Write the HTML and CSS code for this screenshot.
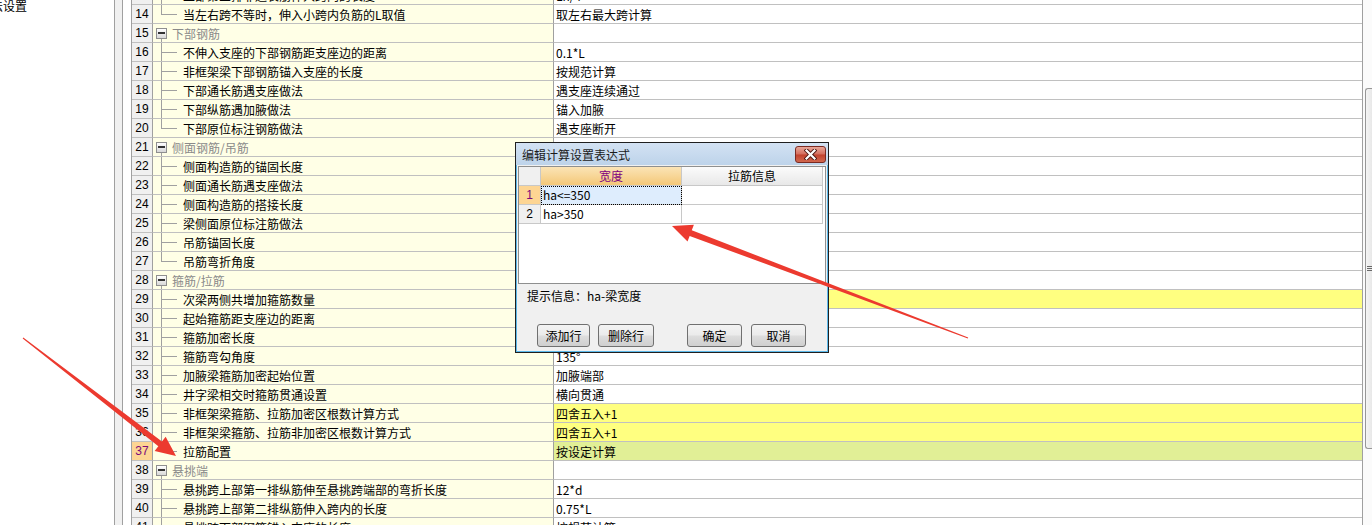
FILE: index.html
```html
<!DOCTYPE html>
<html lang="zh-CN">
<head>
<meta charset="utf-8">
<title>计算设置</title>
<link rel="stylesheet" href="styles.css">
</head>
<body>
<div class="app">
  <div class="side"><div class="side-title">方法设置</div></div>
  <div class="splitter"></div>
  <div class="main">
    <div class="grid">
      <div class="row"><div class="num">13</div><div class="name child">上部第三排非通长筋伸入跨内的长度</div><div class="val">Ln/4</div></div>
      <div class="row"><div class="num">14</div><div class="name child last">当左右跨不等时，伸入小跨内负筋的L取值</div><div class="val">取左右最大跨计算</div></div>
      <div class="row"><div class="num">15</div><div class="name group"><span class="box"></span>下部钢筋</div><div class="val"></div></div>
      <div class="row"><div class="num">16</div><div class="name child">不伸入支座的下部钢筋距支座边的距离</div><div class="val">0.1*L</div></div>
      <div class="row"><div class="num">17</div><div class="name child">非框架梁下部钢筋锚入支座的长度</div><div class="val">按规范计算</div></div>
      <div class="row"><div class="num">18</div><div class="name child">下部通长筋遇支座做法</div><div class="val">遇支座连续通过</div></div>
      <div class="row"><div class="num">19</div><div class="name child">下部纵筋遇加腋做法</div><div class="val">锚入加腋</div></div>
      <div class="row"><div class="num">20</div><div class="name child last">下部原位标注钢筋做法</div><div class="val">遇支座断开</div></div>
      <div class="row"><div class="num">21</div><div class="name group"><span class="box"></span>侧面钢筋/吊筋</div><div class="val"></div></div>
      <div class="row"><div class="num">22</div><div class="name child">侧面构造筋的锚固长度</div><div class="val">15*d</div></div>
      <div class="row"><div class="num">23</div><div class="name child">侧面通长筋遇支座做法</div><div class="val">遇支座断开</div></div>
      <div class="row"><div class="num">24</div><div class="name child">侧面构造筋的搭接长度</div><div class="val">15*d</div></div>
      <div class="row"><div class="num">25</div><div class="name child">梁侧面原位标注筋做法</div><div class="val">遇支座断开</div></div>
      <div class="row"><div class="num">26</div><div class="name child">吊筋锚固长度</div><div class="val">20*d</div></div>
      <div class="row"><div class="num">27</div><div class="name child last">吊筋弯折角度</div><div class="val">按规范计算</div></div>
      <div class="row"><div class="num">28</div><div class="name group"><span class="box"></span>箍筋/拉筋</div><div class="val"></div></div>
      <div class="row"><div class="num">29</div><div class="name child">次梁两侧共增加箍筋数量</div><div class="val y">0</div></div>
      <div class="row"><div class="num">30</div><div class="name child">起始箍筋距支座边的距离</div><div class="val">50</div></div>
      <div class="row"><div class="num">31</div><div class="name child">箍筋加密长度</div><div class="val">按规范计算</div></div>
      <div class="row"><div class="num">32</div><div class="name child">箍筋弯勾角度</div><div class="val">135°</div></div>
      <div class="row"><div class="num">33</div><div class="name child">加腋梁箍筋加密起始位置</div><div class="val">加腋端部</div></div>
      <div class="row"><div class="num">34</div><div class="name child">井字梁相交时箍筋贯通设置</div><div class="val">横向贯通</div></div>
      <div class="row"><div class="num">35</div><div class="name child">非框架梁箍筋、拉筋加密区根数计算方式</div><div class="val y">四舍五入+1</div></div>
      <div class="row"><div class="num">36</div><div class="name child">非框架梁箍筋、拉筋非加密区根数计算方式</div><div class="val y">四舍五入+1</div></div>
      <div class="row"><div class="num sel">37</div><div class="name child last">拉筋配置</div><div class="val g">按设定计算</div></div>
      <div class="row"><div class="num">38</div><div class="name group"><span class="box"></span>悬挑端</div><div class="val"></div></div>
      <div class="row"><div class="num">39</div><div class="name child">悬挑跨上部第一排纵筋伸至悬挑跨端部的弯折长度</div><div class="val">12*d</div></div>
      <div class="row"><div class="num">40</div><div class="name child">悬挑跨上部第二排纵筋伸入跨内的长度</div><div class="val">0.75*L</div></div>
      <div class="row"><div class="num">41</div><div class="name child">悬挑跨下部钢筋锚入支座的长度</div><div class="val">按规范计算</div></div>
    </div>
    <div class="vscroll"><div class="thumb"><div class="grip"></div></div></div>
  </div>
</div>

<div class="dlg">
  <div class="dlg-title">
    <span>编辑计算设置表达式</span>
    <div class="close">
      <svg width="13" height="11" viewBox="0 0 13 11">
        <path d="M2.5 1.5 L10.5 9.5 M10.5 1.5 L2.5 9.5" stroke="#4a1510" stroke-width="4" stroke-linecap="square"/>
        <path d="M2.5 1.5 L10.5 9.5 M10.5 1.5 L2.5 9.5" stroke="#ffffff" stroke-width="2.2" stroke-linecap="square"/>
      </svg>
    </div>
  </div>
  <div class="dlg-body">
    <div class="egrid">
      <div class="erow"><div class="ec-n"></div><div class="ec eh1">宽度</div><div class="ec eh2">拉筋信息</div></div>
      <div class="erow"><div class="ec-n sel">1</div><div class="ec focus">ha&lt;=350</div><div class="ec"></div></div>
      <div class="erow"><div class="ec-n">2</div><div class="ec">ha&gt;350</div><div class="ec"></div></div>
    </div>
    <div class="hint">提示信息：ha-梁宽度</div>
    <div class="btns">
      <div class="btn b1">添加行</div>
      <div class="btn b2">删除行</div>
      <div class="btn b3">确定</div>
      <div class="btn b4">取消</div>
    </div>
  </div>
</div>

<svg class="arrows" width="1372" height="525" viewBox="0 0 1372 525">
  <polygon fill="#ec3a2f" points="176,456 154.66,450.92 158.33,446.17 22.69,338.40 23.31,337.60 161.99,441.41 165.66,436.66"/>
  <polygon fill="#ec3a2f" points="672,226 693.89,224.66 691.77,230.27 968.18,337.53 967.82,338.47 689.65,235.89 687.52,241.50"/>
</svg>
</body>
</html>
```
FILE: styles.css
```css
* { box-sizing: border-box; }
html, body { margin: 0; padding: 0; }
body {
  width: 1372px;
  height: 525px;
  overflow: hidden;
  position: relative;
  background: #fff;
  font-family: "Noto Sans CJK SC", "Noto Sans", sans-serif;
  font-size: 12px;
  color: #000;
}
.app { display: flex; height: 525px; }
.side {
  width: 115px;
  flex-shrink: 0;
  border-right: 1px solid #a0a0a0;
  background: #fff;
  overflow: hidden;
}
.side-title {
  margin-top: -4px;
  line-height: 19px;
  text-indent: -21px;
  white-space: nowrap;
}
.splitter {
  width: 8px;
  flex-shrink: 0;
  background: #f0f0f0;
  border-right: 1px solid #a0a0a0;
}
.main {
  flex: 1;
  display: flex;
  padding-left: 8px;
  overflow: hidden;
}
.grid {
  width: 1232px;
  flex-shrink: 0;
  margin-top: -14px;
  border-left: 1px solid #a0a0a0;
  border-right: 1px solid #a0a0a0;
}
.row { display: flex; height: 19px; }
.num {
  width: 21px;
  flex-shrink: 0;
  border-right: 1px solid #a0a0a0;
  border-bottom: 1px solid #c0c0c0;
  background: #f0f0f0;
  font-family: "Liberation Sans", sans-serif;
  font-size: 12px;
  line-height: 19px;
  text-align: center;
  overflow: hidden;
}
.num.sel { background: #fdd593; color: #7a0a7a; }
.name {
  width: 401px;
  flex-shrink: 0;
  border-right: 1px solid #a0a0a0;
  border-bottom: 1px solid #c0c0c0;
  background-color: #ffffe6;
  line-height: 19px;
  padding-left: 30px;
  white-space: nowrap;
  overflow: hidden;
}
.child {
  background-image: linear-gradient(#a0a0a0, #a0a0a0), linear-gradient(#a0a0a0, #a0a0a0);
  background-size: 1px 100%, 15px 1px;
  background-position: 8px 0, 9px 9px;
  background-repeat: no-repeat;
}
.child.last { background-size: 1px 10px, 15px 1px; }
.group {
  padding-left: 3px;
  color: #8a8a8a;
  display: flex;
  align-items: center;
  background-image: linear-gradient(#a0a0a0, #a0a0a0);
  background-size: 1px 4px;
  background-position: 8px 15px;
  background-repeat: no-repeat;
}
.box {
  width: 11px;
  height: 11px;
  flex-shrink: 0;
  margin-right: 5px;
  border: 1px solid #8f8f8f;
  background: linear-gradient(#ffffff, #d8d8d8);
  display: flex;
  align-items: center;
  justify-content: center;
}
.box::after {
  content: "";
  width: 7px;
  height: 2px;
  background: #333;
}
.val {
  flex: 1;
  border-bottom: 1px solid #c0c0c0;
  background: #fff;
  padding-left: 2px;
  line-height: 19px;
  white-space: nowrap;
  overflow: hidden;
}
.val.y { background: #ffff80; }
.val.g { background: #e1ef96; }

.vscroll {
  width: 9px;
  flex-shrink: 0;
  background: #fbfbfb;
  padding-top: 88px;
}
.thumb {
  margin-left: 2px;
  width: 9px;
  height: 361px;
  border: 1px solid #979797;
  border-right: none;
  border-radius: 3px 0 0 3px;
  background: linear-gradient(90deg, #f5f5f5, #e3e3e3);
  display: flex;
  align-items: center;
}
.grip {
  width: 6px;
  height: 5px;
  margin-left: 1px;
  background: repeating-linear-gradient(#6a6a6a 0 1px, transparent 1px 2px);
}

/* dialog */
.dlg {
  position: absolute;
  left: 515px;
  top: 142px;
  width: 314px;
  height: 211px;
  border: 1px solid #1f1f1f;
  background: #5cb9ea;
  display: flex;
  flex-direction: column;
}
.dlg-title {
  height: 22px;
  flex-shrink: 0;
  background: linear-gradient(#d3e2f3, #bdd3ea);
  display: flex;
  align-items: flex-start;
  padding-left: 6px;
}
.dlg-title span { line-height: 23px; color: #1b1b1b; }
.close {
  margin-left: auto;
  margin-right: 2px;
  margin-top: 3px;
  width: 31px;
  height: 17px;
  border: 1px solid #7a2a22;
  border-radius: 3px;
  background: linear-gradient(#e8a799, #d46d5d 48%, #c2412d 52%, #d0684f);
  display: flex;
  align-items: center;
  justify-content: center;
}
.dlg-body {
  flex: 1;
  margin: 0 1px 1px;
  background: #f0f0f0;
  padding: 1px 1px 0;
}
.egrid {
  height: 118px;
  border: 1px solid #8e8f8f;
  background: #fff;
}
.erow { display: flex; height: 19px; }
.ec-n {
  width: 22px;
  flex-shrink: 0;
  border-right: 1px solid #c8c8c8;
  border-bottom: 1px solid #c8c8c8;
  background: #f0f0f0;
  text-align: center;
  line-height: 18px;
  font-family: "Liberation Sans", sans-serif;
}
.ec-n.sel { background: #fdd593; color: #7a0a7a; }
.ec {
  width: 141px;
  flex-shrink: 0;
  border-right: 1px solid #c8c8c8;
  border-bottom: 1px solid #c8c8c8;
  line-height: 18px;
  padding-left: 2px;
  white-space: nowrap;
}
.eh1 {
  background: linear-gradient(#fbe4b6, #f4c878);
  color: #800080;
  text-align: center;
  padding-left: 0;
}
.eh2 {
  background: linear-gradient(#fbfbfb, #e8e8e8);
  text-align: center;
  padding-left: 0;
}
.ec.focus {
  background: #deedfd;
  outline: 1px dotted #000;
  outline-offset: -1px;
}
.hint {
  margin-top: 2px;
  padding-left: 9px;
  line-height: 19px;
}
.btns {
  display: flex;
  margin-top: 19px;
  padding-left: 19px;
}
.btn {
  height: 23px;
  border: 1px solid #707070;
  border-radius: 3px;
  background: linear-gradient(#f3f3f3 0%, #ebebeb 48%, #dddddd 52%, #cfcfcf 100%);
  line-height: 21px;
  text-align: center;
}
.b1 { width: 53px; }
.b2 { width: 56px; margin-left: 8px; }
.b3 { width: 55px; margin-left: 33px; }
.b4 { width: 55px; margin-left: 9px; }

.arrows {
  position: absolute;
  left: 0;
  top: 0;
  pointer-events: none;
}
```
